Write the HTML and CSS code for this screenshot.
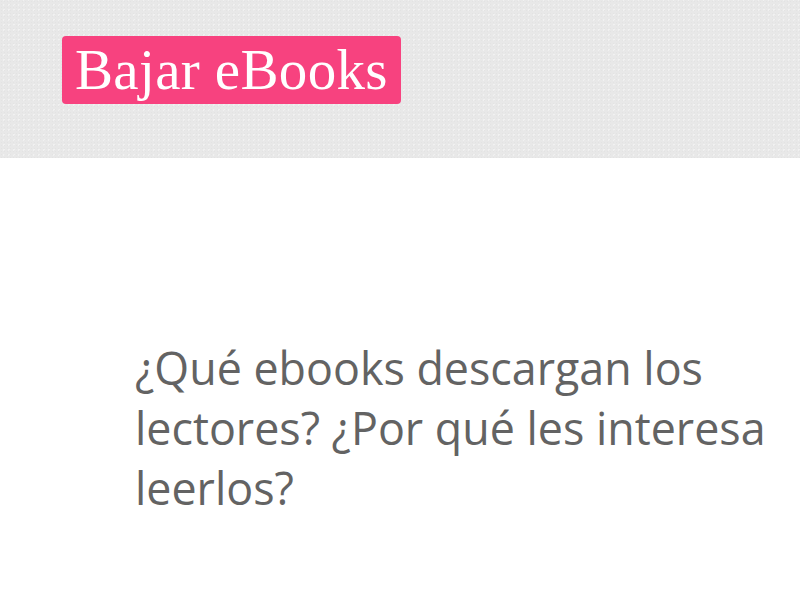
FILE: index.html
```html
<!DOCTYPE html>
<html lang="es">
<head>
<meta charset="utf-8">
<title>Bajar eBooks</title>
<link rel="stylesheet" href="styles.css">
</head>
<body>
<header class="site-header">
  <a class="logo" href="#">Bajar eBooks</a>
</header>
<main class="content">
  <h1 class="title">¿Qué ebooks descargan los lectores? ¿Por qué les interesa leerlos?</h1>
</main>
</body>
</html>
```
FILE: styles.css
```css
html, body {
  margin: 0;
  padding: 0;
  background: #ffffff;
}
.site-header {
  height: 158px;
  background-color: #e8e8e8;
  background-image:
    radial-gradient(rgba(0,0,0,0.025) 1px, transparent 1px),
    radial-gradient(rgba(255,255,255,0.4) 1px, transparent 1px);
  background-size: 3px 3px, 5px 5px;
  background-position: 0 0, 1px 2px;
  padding: 36px 0 0 62px;
  box-sizing: border-box;
}
.logo {
  display: inline-block;
  background: #f7427f;
  color: #ffffff;
  font-family: "Liberation Serif", "Times New Roman", serif;
  font-size: 57px;
  line-height: 68px;
  height: 68px;
  padding: 0 13px 0 13px;
  border-radius: 4px;
  text-decoration: none;
  letter-spacing: 0.35px;
}
.content {
  padding: 0 20px 0 135px;
}
.title {
  margin: 0;
  padding-top: 180px;
  font-family: "Open Sans", sans-serif;
  font-weight: 400;
  font-size: 44.8px;
  line-height: 60px;
  color: #636363;
  max-width: 640px;
}
```
